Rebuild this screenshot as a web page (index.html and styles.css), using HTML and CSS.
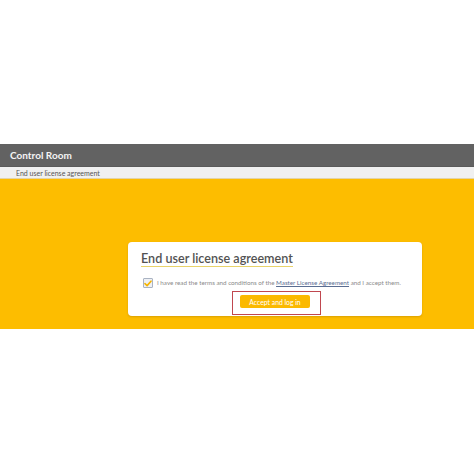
FILE: index.html
```html
<!DOCTYPE html>
<html>
<head>
<meta charset="utf-8">
<link rel="stylesheet" href="styles.css">
</head>
<body>
<div class="page">
  <div class="top-space"></div>
  <header class="appbar">Control Room</header>
  <div class="crumb">End user license agreement</div>
  <main class="stage">
    <section class="card">
      <h1 class="title">End user license agreement</h1>
      <label class="agree">
        <span class="box">
          <svg width="8" height="7" viewBox="0 0 8 7"><path d="M1 3.6 L3.1 5.6 L7 1.2" fill="none" stroke="#f5b400" stroke-width="1.6" stroke-linecap="round" stroke-linejoin="round"/></svg>
        </span>
        <span class="agree-text">I have read the terms and conditions of the <a class="link">Master License Agreement</a> and I accept them.</span>
      </label>
      <div class="actions">
        <div class="highlight">
          <button class="btn">Accept and log in</button>
        </div>
      </div>
    </section>
  </main>
</div>
</body>
</html>
```

FILE: styles.css
```css
html, body {
  margin: 0;
  padding: 0;
  background: #ffffff;
}
body {
  font-family: Lato, "Open Sans", "Liberation Sans", sans-serif;
  width: 474px;
  height: 474px;
  overflow: hidden;
}
.top-space {
  height: 144px;
}
.appbar {
  height: 23px;
  background: #626262;
  color: #f4f4f4;
  font-size: 10px;
  font-weight: 700;
  display: flex;
  align-items: center;
  padding-left: 10px;
  box-sizing: border-box;
  border-bottom: 1px solid #5a5a5a;
}
.crumb {
  height: 11px;
  background: #f0f0f0;
  color: #555;
  font-size: 7px;
  display: flex;
  align-items: center;
  padding-left: 16px;
  border-bottom: 1px solid #e2d3a8;
}
.stage {
  height: 150px;
  background: #fdbd00;
  padding-top: 63px;
  padding-left: 128px;
  box-sizing: border-box;
}
.card {
  width: 294px;
  height: 74px;
  background: #ffffff;
  border-radius: 4px;
  box-sizing: border-box;
  padding: 10px 13px 0 13px;
  box-shadow: 0 1px 2px rgba(120, 80, 0, 0.25);
  display: flex;
  flex-direction: column;
  align-items: flex-start;
}
.title {
  margin: 0;
  font-size: 12.6px;
  font-weight: 600;
  color: #525252;
  line-height: 13px;
  padding-bottom: 1px;
  border-bottom: 1px solid #e8d36a;
}
.agree {
  display: flex;
  align-items: center;
  margin-top: 11px;
  padding-left: 2px;
  height: 10px;
}
.box {
  width: 8px;
  height: 8px;
  border: 1px solid #aab3c2;
  background: #eef0f4;
  border-radius: 1px;
  display: flex;
  align-items: center;
  justify-content: center;
  flex: none;
}
.agree-text {
  margin-left: 4px;
  font-size: 6.25px;
  line-height: 8px;
  color: #8a8a8a;
  white-space: nowrap;
}
.link {
  color: #5a6d92;
  text-decoration: underline;
}
.actions {
  display: flex;
  padding-left: 91px;
  margin-top: 3px;
}
.highlight {
  border: 1px solid #c0474f;
  padding: 3px 10px 6px 7px;
  display: flex;
}
.btn {
  font-family: inherit;
  background: #fbb900;
  color: #ffffff;
  border: none;
  border-radius: 2px;
  font-size: 6.8px;
  height: 13px;
  width: 70px;
  padding: 0;
}
```
